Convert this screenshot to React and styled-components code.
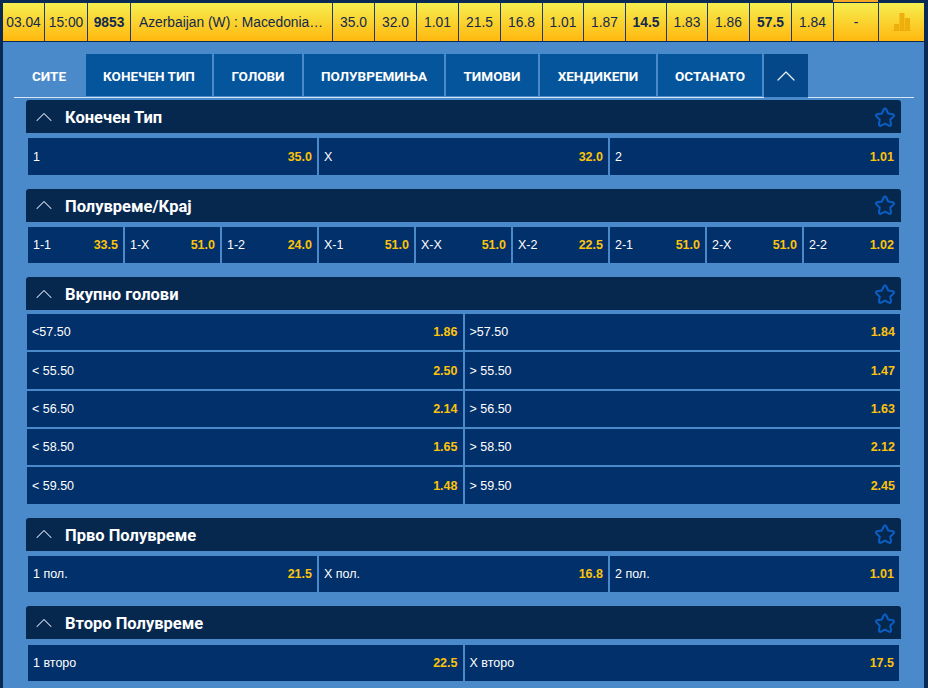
import React from "react";
import styled, { createGlobalStyle } from "styled-components";
import { ChevronUp } from "lucide-react";

const Global = createGlobalStyle`
  html, body {
    margin: 0;
    height: 688px;
    overflow: hidden;
    background: #0a2a56;
  }
`;

const topCells = [
  { w: 42, t: "03.04" },
  { w: 43, t: "15:00" },
  { w: 43, t: "9853", bold: true },
  { w: 202, t: "Azerbaijan (W) : Macedonia…", left: true },
  { w: 42, t: "35.0" },
  { w: 42, t: "32.0" },
  { w: 42, t: "1.01" },
  { w: 42, t: "21.5" },
  { w: 42, t: "16.8" },
  { w: 41, t: "1.01" },
  { w: 42, t: "1.87" },
  { w: 41, t: "14.5", bold: true },
  { w: 41, t: "1.83" },
  { w: 42, t: "1.86" },
  { w: 42, t: "57.5", bold: true },
  { w: 42, t: "1.84" },
  { w: 45, t: "-", marked: true },
];

const tabs = [
  { t: "СИТЕ", w: 72, active: true },
  { t: "КОНЕЧЕН ТИП", w: 126 },
  { t: "ГОЛОВИ", w: 88 },
  { t: "ПОЛУВРЕМИЊА", w: 140 },
  { t: "ТИМОВИ", w: 92 },
  { t: "ХЕНДИКЕПИ", w: 116 },
  { t: "ОСТАНАТО", w: 104 },
];

const sections = [
  { title: "Конечен Тип", cols: 3, rows: [["1", "35.0"], ["X", "32.0"], ["2", "1.01"]] },
  {
    title: "Полувреме/Крај",
    cols: 9,
    rows: [
      ["1-1", "33.5"], ["1-X", "51.0"], ["1-2", "24.0"],
      ["X-1", "51.0"], ["X-X", "51.0"], ["X-2", "22.5"],
      ["2-1", "51.0"], ["2-X", "51.0"], ["2-2", "1.02"],
    ],
  },
  {
    title: "Вкупно голови",
    cols: 2,
    wide: true,
    rows: [
      ["<57.50", "1.86"], [">57.50", "1.84"],
      ["< 55.50", "2.50"], ["> 55.50", "1.47"],
      ["< 56.50", "2.14"], ["> 56.50", "1.63"],
      ["< 58.50", "1.65"], ["> 58.50", "2.12"],
      ["< 59.50", "1.48"], ["> 59.50", "2.45"],
    ],
  },
  { title: "Прво Полувреме", cols: 3, rows: [["1 пол.", "21.5"], ["X пол.", "16.8"], ["2 пол.", "1.01"]] },
  { title: "Второ Полувреме", cols: 2, rows: [["1 второ", "22.5"], ["X второ", "17.5"]] },
];

const Star = () => (
  <StarIcon viewBox="0 0 24 24" fill="none" stroke="#0a5fc4" strokeWidth="2.2" strokeLinejoin="round">
    <path d="M12 2.6c.6 0 1 .4 1.3 1l2.2 4.6 5 .7c1.3.2 1.8 1.5.9 2.4l-3.7 3.6.9 5c.2 1.3-1.1 2.2-2.2 1.6L12 19.2l-4.4 2.3c-1.1.6-2.4-.3-2.2-1.6l.9-5-3.7-3.6c-.9-.9-.4-2.2.9-2.4l5-.7 2.2-4.6c.3-.6.7-1 1.3-1z" />
  </StarIcon>
);

const Chart = () => (
  <svg width="18" height="18" viewBox="0 0 18 18" fill="#eeae0c">
    <rect x="1" y="11" width="5" height="6" />
    <rect x="6.5" y="0" width="5" height="17" />
    <rect x="12" y="5" width="5" height="12" />
    <rect x="0" y="17" width="18" height="1" />
  </svg>
);

const App = () => {
  return (
    <Page>
      <Global />
      <TopRow>
        {topCells.map((c, i) => (
          <TopCell key={i} $w={c.w} $bold={c.bold} $left={c.left} $marked={c.marked}>
            <span>{c.t}</span>
          </TopCell>
        ))}
        <StatsCell>
          <Chart />
        </StatsCell>
      </TopRow>
      <Tabs>
        {tabs.map((t) => (
          <Tab key={t.t} $w={t.w} $active={t.active}>
            {t.t}
          </Tab>
        ))}
        <CollapseTab>
          <ChevronUp size={32} strokeWidth={0.9} color="#e8f0f8" />
        </CollapseTab>
      </Tabs>
      {sections.map((s) => (
        <Section key={s.title}>
          <Header>
            <ChevronUp size={28} strokeWidth={0.9} color="#dfe8f2" />
            <Title>{s.title}</Title>
            <Star />
          </Header>
          <Grid $cols={s.cols} $wide={s.wide}>
            {s.rows.map(([label, odd]) => (
              <Odd key={label} $wide={s.wide}>
                <span>{label}</span>
                <b>{odd}</b>
              </Odd>
            ))}
          </Grid>
        </Section>
      ))}
    </Page>
  );
};

const Page = styled.div`
  margin: 3px 4px 0 3px;
  height: 685px;
  background: #4a8aca;
  font-family: "Liberation Sans", Arial, sans-serif;
`;

const TopRow = styled.div`
  display: flex;
  height: 38px;
  border-bottom: 1px solid #0a2a56;
  background: linear-gradient(#f6ee50, #ffb80e);
`;

const TopCell = styled.div`
  position: relative;
  flex: 0 0 ${(p) => p.$w}px;
  min-width: 0;
  box-sizing: border-box;
  border-right: 1px solid #1c3a6e;
  display: flex;
  align-items: center;
  justify-content: ${(p) => (p.$left ? "flex-start" : "center")};
  padding-left: ${(p) => (p.$left ? "8px" : "0")};
  font-size: 13.8px;
  font-weight: ${(p) => (p.$bold ? 700 : 400)};
  color: #12294d;

  span {
    white-space: nowrap;
  }

  &::before {
    content: "";
    display: ${(p) => (p.$marked ? "block" : "none")};
    position: absolute;
    left: -1px;
    right: 0;
    top: -3px;
    height: 2px;
    background: #f5a623;
  }
`;

const StatsCell = styled.div`
  flex: 1;
  display: flex;
  align-items: center;
  justify-content: center;
`;

const Tabs = styled.div`
  display: flex;
  gap: 2px;
  height: 42px;
  padding-bottom: 1px;
  margin: 12px 10px 0 11px;
  border-bottom: 1px solid #d6e6f5;
`;

const Tab = styled.div`
  box-sizing: border-box;
  width: ${(p) => p.$w}px;
  margin-right: ${(p) => (p.$active ? "-2px" : "0")};
  padding: 1px ${(p) => (p.$active ? "2px" : "0")} 0 0;
  display: flex;
  align-items: center;
  justify-content: center;
  background: ${(p) => (p.$active ? "transparent" : "#04559b")};
  color: #fff;
  font-family: "Roboto", sans-serif;
  font-size: 13.5px;
  font-weight: 700;
`;

const CollapseTab = styled.div`
  box-sizing: border-box;
  width: 44px;
  height: 44px;
  display: flex;
  align-items: center;
  justify-content: center;
  background: #04488a;
  border-bottom: 1px solid #4a8aca;
`;

const Section = styled.div`
  margin: 2.2px 23px 0 23px;

  & + & {
    margin-top: 14px;
  }
`;

const Header = styled.div`
  display: flex;
  align-items: center;
  height: 33px;
  padding: 0 5px 0 4px;
  border-radius: 3px 3px 0 0;
  background: #06284f;
`;

const Title = styled.div`
  flex: 1;
  margin-left: 7px;
  padding-top: 2px;
  color: #fff;
  font-family: "Roboto", sans-serif;
  font-size: 16.5px;
  font-weight: 700;
`;

const StarIcon = styled.svg`
  width: 22px;
  height: 22px;
`;

const Grid = styled.div`
  display: grid;
  grid-template-columns: repeat(${(p) => p.$cols}, 1fr);
  gap: 2px;
  margin: ${(p) => (p.$wide ? "3.6px 1px 0" : "5.3px 2px 0")};
`;

const Odd = styled.div`
  display: flex;
  align-items: center;
  justify-content: space-between;
  height: ${(p) => (p.$wide ? "36.36px" : "36.3px")};
  padding: 0 5px 0 5px;
  background: #02306a;
  color: #fff;
  font-size: 12.5px;

  b {
    color: #fcc30a;
    font-weight: 700;
  }
`;

export default App;
